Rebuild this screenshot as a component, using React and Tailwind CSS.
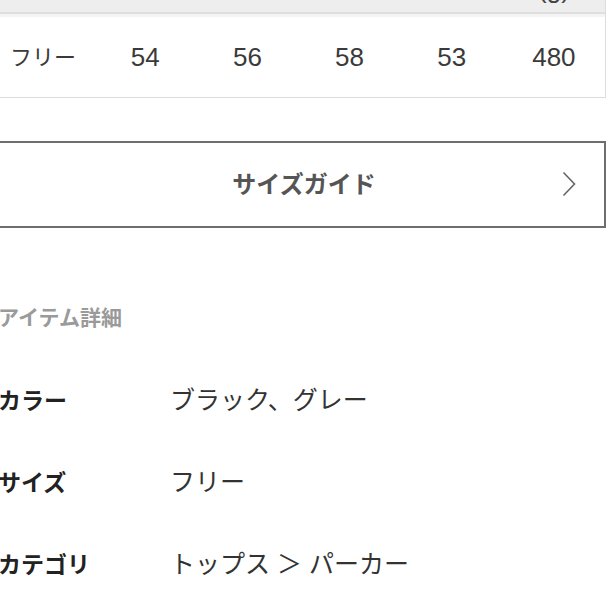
import React from "react";

const font = { fontFamily: '"Liberation Sans", "Noto Sans CJK JP", sans-serif' };

export default function App() {
  const nums = ["54", "56", "58", "53", "480"];
  const details = [
    ["カラー", "ブラック、グレー"],
    ["サイズ", "フリー"],
    ["カテゴリ", "トップス ＞ パーカー"],
  ];
  return (
    <div className="w-[608px] h-[608px] overflow-hidden bg-white" style={font}>
      <div className="-ml-[8px] w-[614px]">
        {/* table */}
        <div className="border-r border-[#dddddd]">
          <div className="h-[12px] bg-[#eeeeee] overflow-hidden grid grid-cols-6">
            <div className="col-start-6 flex justify-center">
              <span className="-mt-[26px] text-[26px] leading-[30px] text-[#444]">(g)</span>
            </div>
          </div>
          <div className="h-[2px] bg-[#dfdfdf]" />
          <div className="h-[3px] bg-[#f4f4f4]" />
          <div className="grid grid-cols-6 h-[81px] items-center border-b border-[#dddddd] text-[#3a3a3a]">
            <div className="flex justify-center text-[22px]">フリー</div>
            {nums.map((n) => (
              <div key={n} className="flex justify-center text-[26px]">
                {n}
              </div>
            ))}
          </div>
        </div>

        {/* size guide button */}
        <div className="mt-[43px] h-[87px] border-2 border-[#6e6e6e] flex items-center pl-[52px] pr-[28px]">
          <div className="flex-1 flex justify-center text-[24px] font-bold text-[#555555]">
            サイズガイド
          </div>
          <svg width="14" height="26" viewBox="0 0 14 26" className="-mt-[2px]">
            <path d="M1.5 1.5 L12.5 13 L1.5 24.5" fill="none" stroke="#666" strokeWidth="1.6" />
          </svg>
        </div>

        {/* details */}
        <div className="pl-[6px]">
          <div className="mt-[76px] text-[21px] leading-[28px] font-bold text-[#9a9a9a]">
            アイテム詳細
          </div>
          <div className="mt-[28px]">
            {details.map(([k, v]) => (
              <div key={k} className="h-[82px] flex items-center">
                <div className="w-[172px] text-[23px] font-bold text-[#222222]">{k}</div>
                <div className="text-[25px] text-[#333333]">{v}</div>
              </div>
            ))}
          </div>
        </div>
      </div>
    </div>
  );
}
